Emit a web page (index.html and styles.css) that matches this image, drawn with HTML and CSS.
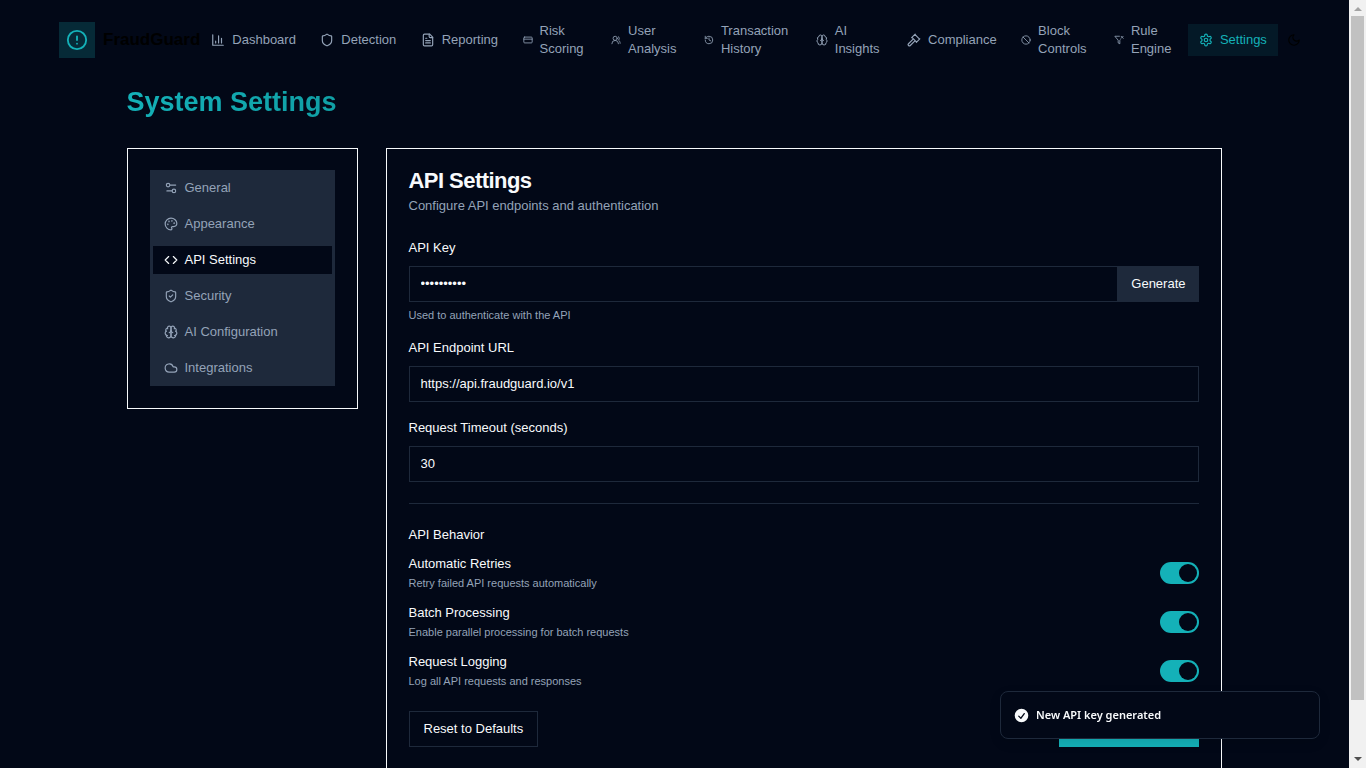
FILE: index.html
```html
<!DOCTYPE html>
<html lang="en">
<head>
    <meta charset="UTF-8">
    <meta name="viewport" content="width=device-width, initial-scale=1">
    <title>FraudGuard - System Settings</title>
    <link rel="stylesheet" href="styles.css">
</head>
<body>
    <div class="page">
        <header class="header">
            <a class="brand" href="#">
                <span class="brand-icon">
                    <svg viewBox="0 0 24 24"><circle cx="12" cy="12" r="10"/><path d="M12 8v4M12 16h.01"/></svg>
                </span>
                <span class="brand-name">FraudGuard</span>
            </a>
            <nav class="nav">
                <a class="nav-link" href="#">
                    <svg viewBox="0 0 24 24"><path d="M3 3v18h18M8 17v-3M13 17V5M18 17V9"/></svg>
                    <span>Dashboard</span>
                </a>
                <a class="nav-link" href="#">
                    <svg viewBox="0 0 24 24"><path d="M20 13c0 5-3.5 7.5-7.66 8.95a1 1 0 0 1-.67-.01C7.5 20.5 4 18 4 13V6a1 1 0 0 1 1-1c2 0 4.5-1.2 6.24-2.72a1.17 1.17 0 0 1 1.52 0C14.51 3.81 17 5 19 5a1 1 0 0 1 1 1z"/></svg>
                    <span>Detection</span>
                </a>
                <a class="nav-link" href="#">
                    <svg viewBox="0 0 24 24"><path d="M15 2H6a2 2 0 0 0-2 2v16a2 2 0 0 0 2 2h12a2 2 0 0 0 2-2V7Z"/><path d="M14 2v4a2 2 0 0 0 2 2h4M10 9H8M16 13H8M16 17H8"/></svg>
                    <span>Reporting</span>
                </a>
                <a class="nav-link wrap" href="#">
                    <svg viewBox="0 0 24 24"><rect width="20" height="14" x="2" y="5" rx="2"/><path d="M2 10h20"/></svg>
                    <span>Risk<br>Scoring</span>
                </a>
                <a class="nav-link wrap" href="#">
                    <svg viewBox="0 0 24 24"><path d="M18 21a8 8 0 0 0-16 0"/><circle cx="10" cy="8" r="5"/><path d="M22 20c0-3.37-2-6.5-4-8a5 5 0 0 0-.45-8.3"/></svg>
                    <span>User<br>Analysis</span>
                </a>
                <a class="nav-link wrap" href="#">
                    <svg viewBox="0 0 24 24"><path d="M3 12a9 9 0 1 0 9-9 9.75 9.75 0 0 0-6.74 2.74L3 8"/><path d="M3 3v5h5M12 7v5l4 2"/></svg>
                    <span>Transaction<br>History</span>
                </a>
                <a class="nav-link wrap" href="#">
                    <svg class="brain" viewBox="0 0 24 24"><path d="M12 5a3 3 0 1 0-5.997.125 4 4 0 0 0-2.526 5.77 4 4 0 0 0 .556 6.588A4 4 0 1 0 12 18Z"/><path d="M12 5a3 3 0 1 1 5.997.125 4 4 0 0 1 2.526 5.77 4 4 0 0 1-.556 6.588A4 4 0 1 1 12 18Z"/><path d="M15 13a4.5 4.5 0 0 1-3-4 4.5 4.5 0 0 1-3 4"/></svg>
                    <span>AI<br>Insights</span>
                </a>
                <a class="nav-link" href="#">
                    <svg viewBox="0 0 24 24"><path d="m14 13-8.381 8.38a1 1 0 0 1-3.001-3l8.384-8.381M16 16l6-6M21.5 10.5l-8-8M8 8l6-6M8.5 7.5l8 8"/></svg>
                    <span>Compliance</span>
                </a>
                <a class="nav-link wrap" href="#">
                    <svg viewBox="0 0 24 24"><circle cx="12" cy="12" r="10"/><path d="m4.9 4.9 14.2 14.2"/></svg>
                    <span>Block<br>Controls</span>
                </a>
                <a class="nav-link wrap" href="#">
                    <svg viewBox="0 0 24 24"><path d="M13.013 3H2l8 9.46V19l4 2v-8.54l.9-1.055M22 3l-5 5M17 3l5 5"/></svg>
                    <span>Rule<br>Engine</span>
                </a>
                <a class="nav-link active" href="#">
                    <svg viewBox="0 0 24 24"><path d="M12.22 2h-.44a2 2 0 0 0-2 2v.18a2 2 0 0 1-1 1.73l-.43.25a2 2 0 0 1-2 0l-.15-.08a2 2 0 0 0-2.73.73l-.22.38a2 2 0 0 0 .73 2.73l.15.1a2 2 0 0 1 1 1.72v.51a2 2 0 0 1-1 1.74l-.15.09a2 2 0 0 0-.73 2.73l.22.38a2 2 0 0 0 2.73.73l.15-.08a2 2 0 0 1 2 0l.43.25a2 2 0 0 1 1 1.73V20a2 2 0 0 0 2 2h.44a2 2 0 0 0 2-2v-.18a2 2 0 0 1 1-1.73l.43-.25a2 2 0 0 1 2 0l.15.08a2 2 0 0 0 2.73-.73l.22-.39a2 2 0 0 0-.73-2.73l-.15-.08a2 2 0 0 1-1-1.74v-.5a2 2 0 0 1 1-1.74l.15-.09a2 2 0 0 0 .73-2.73l-.22-.38a2 2 0 0 0-2.73-.73l-.15.08a2 2 0 0 1-2 0l-.43-.25a2 2 0 0 1-1-1.73V4a2 2 0 0 0-2-2z"/><circle cx="12" cy="12" r="3"/></svg>
                    <span>Settings</span>
                </a>
            </nav>
            <button class="theme-button" type="button" aria-label="Toggle theme">
                <svg viewBox="0 0 24 24"><path d="M12 3a6 6 0 0 0 9 9 9 9 0 1 1-9-9Z"/></svg>
            </button>
        </header>

        <main class="content">
            <h1>System Settings</h1>
            <div class="columns">
                <aside class="card sidebar">
                    <div class="tabs">
                        <button class="tab" type="button">
                            <svg viewBox="0 0 24 24"><path d="M20 7h-9M14 17H5"/><circle cx="17" cy="17" r="3"/><circle cx="7" cy="7" r="3"/></svg>
                            General
                        </button>
                        <button class="tab" type="button">
                            <svg viewBox="0 0 24 24"><circle cx="13.5" cy="6.5" r=".5"/><circle cx="17.5" cy="10.5" r=".5"/><circle cx="8.5" cy="7.5" r=".5"/><circle cx="6.5" cy="12.5" r=".5"/><path d="M12 2C6.5 2 2 6.5 2 12s4.5 10 10 10c.926 0 1.648-.746 1.648-1.688 0-.437-.18-.835-.437-1.125-.29-.289-.438-.652-.438-1.125a1.64 1.64 0 0 1 1.668-1.668h1.996c3.051 0 5.555-2.503 5.555-5.554C21.965 6.012 17.461 2 12 2z"/></svg>
                            Appearance
                        </button>
                        <button class="tab selected" type="button">
                            <svg viewBox="0 0 24 24"><path d="m16 18 6-6-6-6M8 6l-6 6 6 6"/></svg>
                            API Settings
                        </button>
                        <button class="tab" type="button">
                            <svg viewBox="0 0 24 24"><path d="M20 13c0 5-3.5 7.5-7.66 8.95a1 1 0 0 1-.67-.01C7.5 20.5 4 18 4 13V6a1 1 0 0 1 1-1c2 0 4.5-1.2 6.24-2.72a1.17 1.17 0 0 1 1.52 0C14.51 3.81 17 5 19 5a1 1 0 0 1 1 1z"/><path d="m9 12 2 2 4-4"/></svg>
                            Security
                        </button>
                        <button class="tab" type="button">
                            <svg viewBox="0 0 24 24"><path d="M12 5a3 3 0 1 0-5.997.125 4 4 0 0 0-2.526 5.77 4 4 0 0 0 .556 6.588A4 4 0 1 0 12 18Z"/><path d="M12 5a3 3 0 1 1 5.997.125 4 4 0 0 1 2.526 5.77 4 4 0 0 1-.556 6.588A4 4 0 1 1 12 18Z"/><path d="M15 13a4.5 4.5 0 0 1-3-4 4.5 4.5 0 0 1-3 4M17.599 6.5a3 3 0 0 0 .399-1.375M6.003 5.125A3 3 0 0 0 6.401 6.5M3.477 10.896a4 4 0 0 1 .585-.396M19.938 10.5a4 4 0 0 1 .585.396M6 18a4 4 0 0 1-1.967-.516M19.967 17.484A4 4 0 0 1 18 18"/></svg>
                            AI Configuration
                        </button>
                        <button class="tab" type="button">
                            <svg viewBox="0 0 24 24"><path d="M17.5 19H9a7 7 0 1 1 6.71-9h1.79a4.5 4.5 0 1 1 0 9Z"/></svg>
                            Integrations
                        </button>
                    </div>
                </aside>

                <section class="card panel">
                    <h2>API Settings</h2>
                    <p class="subtitle">Configure API endpoints and authentication</p>

                    <form class="form">
                        <div class="field">
                            <label for="api-key">API Key</label>
                            <div class="key-row">
                                <input id="api-key" type="password" value="sk_live_12">
                                <button class="generate" type="button">Generate</button>
                            </div>
                            <p class="hint">Used to authenticate with the API</p>
                        </div>
                        <div class="field">
                            <label for="endpoint">API Endpoint URL</label>
                            <input id="endpoint" type="text" value="https://api.fraudguard.io/v1">
                        </div>
                        <div class="field">
                            <label for="timeout">Request Timeout (seconds)</label>
                            <input id="timeout" type="text" value="30">
                        </div>

                        <hr>

                        <h3>API Behavior</h3>
                        <div class="options">
                            <div class="option">
                                <div>
                                    <label for="retries">Automatic Retries</label>
                                    <p>Retry failed API requests automatically</p>
                                </div>
                                <input class="switch" id="retries" type="checkbox" checked>
                            </div>
                            <div class="option">
                                <div>
                                    <label for="batch">Batch Processing</label>
                                    <p>Enable parallel processing for batch requests</p>
                                </div>
                                <input class="switch" id="batch" type="checkbox" checked>
                            </div>
                            <div class="option">
                                <div>
                                    <label for="logging">Request Logging</label>
                                    <p>Log all API requests and responses</p>
                                </div>
                                <input class="switch" id="logging" type="checkbox" checked>
                            </div>
                        </div>

                        <div class="actions">
                            <button class="reset" type="reset">Reset to Defaults</button>
                            <button class="save" type="button" aria-label="Save changes"></button>
                        </div>
                    </form>
                </section>
            </div>
        </main>
    </div>

    <div class="toast" role="status">
        <svg viewBox="0 0 20 20"><path fill-rule="evenodd" d="M10 18a8 8 0 100-16 8 8 0 000 16zm3.857-9.809a.75.75 0 00-1.214-.882l-3.483 4.79-1.88-1.88a.75.75 0 10-1.06 1.061l2.5 2.5a.75.75 0 001.137-.089l4-5.5z"/></svg>
        New API key generated
    </div>

    <div class="scrollbar">
        <span class="arrow up"></span>
        <span class="thumb"></span>
        <span class="arrow down"></span>
    </div>
</body>
</html>
```
FILE: styles.css
```css
* {
    box-sizing: border-box;
}
body {
    margin: 0;
    height: 100vh;
    overflow: hidden;
    background-color: #020817;
    color: #f8fafc;
    font-family: "Liberation Sans", Arial, sans-serif;
    font-size: 13px;
    line-height: 18px;
}
h1, h2, h3, p {
    margin: 0;
}
a {
    color: inherit;
    text-decoration: none;
}
button, input {
    font: inherit;
    color: inherit;
}
button {
    border: none;
    padding: 0;
    cursor: pointer;
}
svg {
    width: 14px;
    height: 14px;
    flex-shrink: 0;
    fill: none;
    stroke: currentColor;
    stroke-width: 2;
    stroke-linecap: round;
    stroke-linejoin: round;
}
.page {
    padding-right: 17px;
}

/* Top bar */
.header {
    display: flex;
    align-items: center;
    height: 79px;
    padding: 0 48px 0 59px;
}
.brand {
    display: flex;
    align-items: center;
    gap: 8px;
    color: #000;
    font-size: 17px;
    font-weight: bold;
}
.brand-icon {
    display: flex;
    align-items: center;
    justify-content: center;
    width: 36px;
    height: 36px;
    background-color: #062a37;
    color: #14b1b8;
}
.brand-icon svg {
    width: 22px;
    height: 22px;
}
.nav {
    flex: 1;
    display: flex;
    align-items: center;
    justify-content: space-between;
    color: #94a3b8;
}
.nav-link {
    display: flex;
    align-items: center;
    gap: 7px;
    padding: 7px 11px;
    white-space: nowrap;
}
.nav-link.wrap {
    padding-right: 14px;
}
.nav-link.wrap svg {
    width: 10px;
    height: 10px;
}
.nav-link.wrap .brain {
    width: 12px;
    height: 12px;
}
.nav-link.active {
    background-color: #041927;
    color: #14b1b8;
}
.theme-button {
    display: flex;
    margin-left: 9px;
    background: none;
    color: #000;
}

/* Content */
.content {
    max-width: 1152px;
    margin: 0 auto;
    padding: 7px 29px 28px 28px;
}
h1 {
    width: fit-content;
    font-size: 27px;
    line-height: 32px;
    background: linear-gradient(to right, #14b1b8, #109fa5);
    background-clip: text;
    -webkit-background-clip: text;
    color: transparent;
}
.columns {
    display: grid;
    grid-template-columns: 231px 1fr;
    align-items: start;
    gap: 28px;
    margin-top: 30px;
}
.card {
    border: 1px solid #f8fafc;
    padding: 21px 22px 22px;
}
.tabs {
    background-color: #1e293b;
    padding: 4px 3px;
    display: flex;
    flex-direction: column;
    gap: 8px;
}
.tab {
    display: flex;
    align-items: center;
    gap: 7px;
    height: 28px;
    padding: 0 11px;
    background: none;
    color: #94a3b8;
}
.tab.selected {
    background-color: #020817;
    color: #f8fafc;
}
h2 {
    font-size: 22px;
    line-height: 22px;
    letter-spacing: -0.025em;
}
h3 {
    font-size: 13px;
    font-weight: normal;
}
.subtitle {
    margin-top: 5px;
    color: #94a3b8;
}

/* Form */
.form {
    margin-top: 24px;
}
.field {
    margin-bottom: 17px;
}
.field label {
    display: block;
    margin-bottom: 9px;
}
.field input {
    display: block;
    width: 100%;
    height: 36px;
    padding: 0 11px 2px;
    border: 1px solid #1e293b;
    background: none;
}
.key-row {
    display: flex;
}
.generate {
    padding: 0 13px;
    background-color: #1e293b;
}
.hint, .option p {
    font-size: 11px;
    line-height: 14px;
    color: #94a3b8;
}
.hint {
    margin-top: 6px;
}
hr {
    margin: 21px 0 22px;
    border: none;
    border-top: 1px solid #1e293b;
}
.options {
    display: flex;
    flex-direction: column;
    gap: 14px;
    margin-top: 11px;
}
.option {
    display: flex;
    align-items: center;
    justify-content: space-between;
}
.option p {
    margin-top: 3px;
}
.option label {
    display: block;
}
.switch {
    appearance: none;
    width: 39px;
    height: 22px;
    margin: 0;
    padding: 2px;
    border-radius: 11px;
    background-color: #94a3b8;
}
.switch::before {
    content: "";
    display: block;
    width: 18px;
    height: 18px;
    border-radius: 50%;
    background-color: #020817;
}
.switch:checked {
    background-color: #14b1b8;
}
.switch:checked::before {
    margin-left: auto;
}
.actions {
    display: flex;
    justify-content: space-between;
    margin-top: 23px;
}
.reset {
    height: 36px;
    padding: 0 14px;
    border: 1px solid #1e293b;
    background: none;
}
.save {
    width: 140px;
    height: 36px;
    background-color: #14b1b8;
}

/* Toast */
.toast {
    position: fixed;
    right: 46px;
    bottom: 29px;
    display: flex;
    align-items: center;
    gap: 6px;
    width: 320px;
    height: 48px;
    padding: 0 12px;
    border: 1px solid #1e293b;
    border-radius: 8px;
    background-color: #020817;
    box-shadow: 0 4px 12px rgba(0, 0, 0, 0.1);
    font-family: "Noto Sans", sans-serif;
    font-size: 11px;
    font-weight: 600;
}
.toast svg {
    width: 17px;
    height: 17px;
    fill: currentColor;
    stroke: none;
}

/* Scrollbar */
.scrollbar {
    position: fixed;
    top: 0;
    right: 0;
    bottom: 0;
    display: flex;
    flex-direction: column;
    align-items: center;
    width: 17px;
    padding: 7px 0;
    background-color: #f1f1f1;
}
.thumb {
    width: 13px;
    height: 89vh;
    margin: 5px 0 auto;
    background-color: #c1c1c1;
}
.arrow {
    border: 4px solid transparent;
}
.arrow.up {
    border-top: none;
    border-bottom-color: #a3a3a3;
}
.arrow.down {
    border-bottom: none;
    border-top-color: #505050;
}
```
